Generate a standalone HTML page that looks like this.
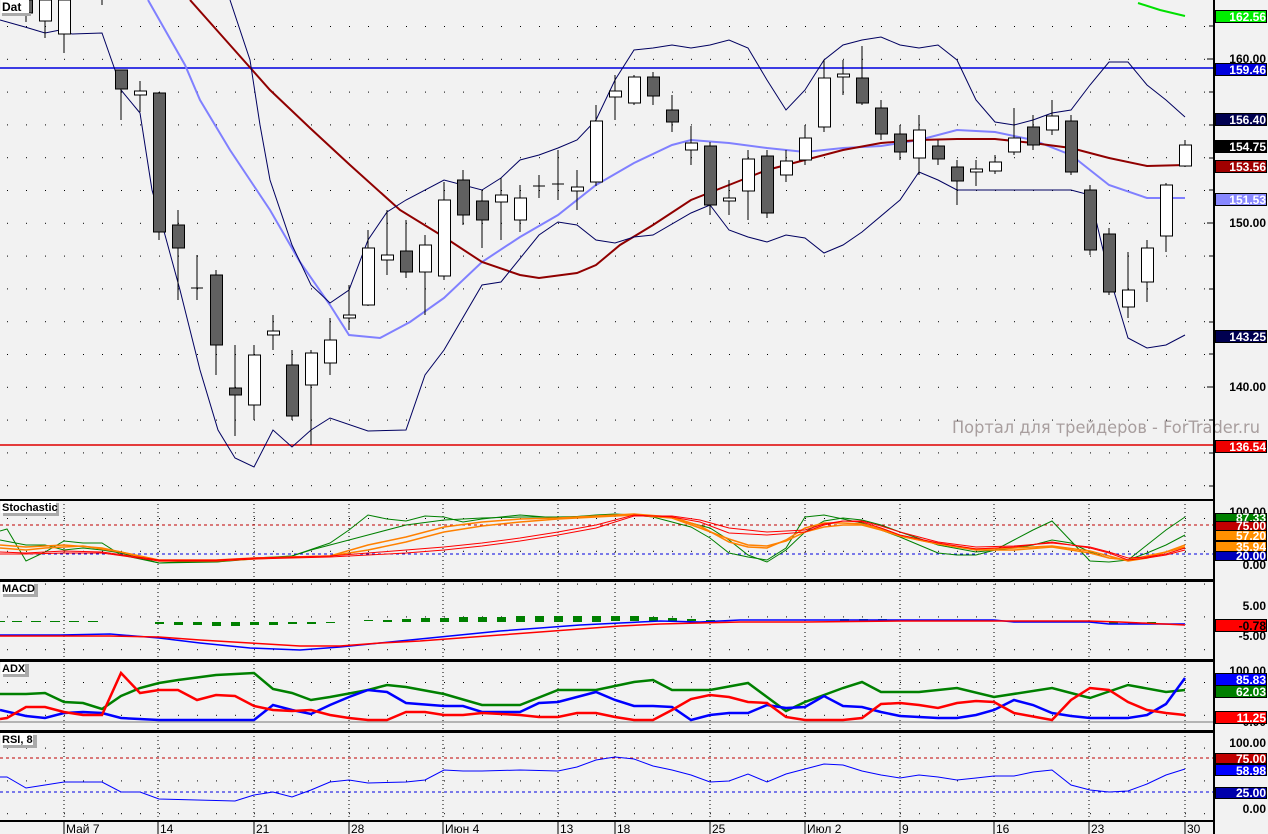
<!DOCTYPE html>
<html><head><meta charset="utf-8"><style>
body{margin:0;background:#f2f2f2;}
svg{display:block;font-family:"Liberation Sans",sans-serif;}
</style></head><body>
<svg width="1268" height="834" viewBox="0 0 1268 834" xmlns="http://www.w3.org/2000/svg">
<defs>
<pattern id="dots" x="7" y="26" width="19" height="32.8" patternUnits="userSpaceOnUse"><rect x="0" y="0" width="1" height="1" fill="#000"/></pattern>
</defs>
<rect width="1268" height="834" fill="#f2f2f2"/>
<rect x="0" y="0" width="1214" height="821" fill="url(#dots)"/>
<g stroke="#000" stroke-width="1" stroke-dasharray="1,3">
<line x1="64" y1="500" x2="64" y2="821"/><line x1="158" y1="500" x2="158" y2="821"/><line x1="254" y1="500" x2="254" y2="821"/><line x1="349" y1="500" x2="349" y2="821"/><line x1="443" y1="500" x2="443" y2="821"/><line x1="558" y1="500" x2="558" y2="821"/><line x1="615" y1="500" x2="615" y2="821"/><line x1="710" y1="500" x2="710" y2="821"/><line x1="805" y1="500" x2="805" y2="821"/><line x1="900" y1="500" x2="900" y2="821"/><line x1="994" y1="500" x2="994" y2="821"/><line x1="1089" y1="500" x2="1089" y2="821"/><line x1="1185" y1="500" x2="1185" y2="821"/>
</g>
<line x1="0" y1="68" x2="1214" y2="68" stroke="#0000e0" stroke-width="1.5"/>
<line x1="0" y1="445" x2="1214" y2="445" stroke="#e00000" stroke-width="1.5"/>
<polyline fill="none" stroke="#00e000" stroke-width="2" points="1138,3 1160,10 1185,16"/>
<polyline fill="none" stroke="#8080ff" stroke-width="2" points="148,0 185,65 200,100 230,150 270,210 300,262 330,305 349,335 380,338 410,322 444,298 482,262 520,237 558,215 596,185 634,163 672,145 691,140 729,143 767,148 805,152 843,148 881,146 919,140 957,130 995,132 1033,140 1071,155 1090,170 1109,185 1147,198 1185,198"/>
<polyline fill="none" stroke="#900000" stroke-width="2" points="190,0 230,45 270,90 310,128 350,165 400,210 444,237 482,262 520,275 539,278 577,273 596,265 620,245 653,225 691,200 729,185 767,170 805,160 843,150 881,143 919,140 957,139 995,139 1033,143 1071,148 1109,158 1147,166 1185,165"/>
<polyline fill="none" stroke="#000060" stroke-width="1" points="230,0 250,60 260,125 270,180 292,245 311,285 330,303 349,290 368,240 387,212 406,200 444,180 482,190 501,178 520,160 539,155 558,148 577,140 596,120 615,80 634,50 653,48 672,45 691,48 710,45 729,40 748,48 767,80 786,110 805,90 824,60 843,45 862,40 881,37 900,45 919,48 938,45 957,60 976,100 995,122 1014,125 1033,120 1052,113 1071,110 1090,85 1109,62 1128,62 1147,85 1166,100 1185,117"/>
<polyline fill="none" stroke="#000060" stroke-width="1" points="0,20 25,27 45,33 60,30 72,34 102,33 115,70 121,90 140,113 152,190 165,235 180,290 200,370 218,430 235,458 254,467 273,430 292,447 311,430 330,418 368,431 406,430 425,375 444,350 482,285 501,282 539,235 558,222 577,225 596,240 615,243 634,237 653,235 691,213 710,205 729,230 748,237 767,242 786,235 805,238 824,253 843,245 862,232 900,200 919,172 938,180 957,190 1071,190 1090,195 1109,275 1128,338 1147,348 1166,345 1185,335"/>
<g stroke="#000" stroke-width="1">
<line x1="26" y1="0" x2="26" y2="22"/><rect x="20.5" y="0" width="12" height="13" fill="#606060"/>
<line x1="45" y1="0" x2="45" y2="38"/><rect x="39.5" y="0" width="12" height="21" fill="#fff"/>
<line x1="64" y1="0" x2="64" y2="53"/><rect x="58.5" y="0" width="12" height="34" fill="#fff"/>
<line x1="102" y1="0" x2="102" y2="5"/>
<line x1="121" y1="70" x2="121" y2="120"/><rect x="115.5" y="70" width="12" height="19" fill="#606060"/>
<line x1="140" y1="81" x2="140" y2="112"/><rect x="134.5" y="91" width="12" height="4" fill="#fff"/>
<line x1="159" y1="92" x2="159" y2="240"/><rect x="153.5" y="93" width="12" height="139" fill="#606060"/>
<line x1="178" y1="210" x2="178" y2="300"/><rect x="172.5" y="225" width="12" height="23" fill="#606060"/>
<line x1="197" y1="255" x2="197" y2="300"/><line x1="191" y1="288" x2="203" y2="288"/>
<line x1="216" y1="270" x2="216" y2="375"/><rect x="210.5" y="275" width="12" height="70" fill="#606060"/>
<line x1="235" y1="345" x2="235" y2="436"/><rect x="229.5" y="388" width="12" height="7" fill="#606060"/>
<line x1="254" y1="345" x2="254" y2="420"/><rect x="248.5" y="355" width="12" height="50" fill="#fff"/>
<line x1="273" y1="315" x2="273" y2="350"/><rect x="267.5" y="331" width="12" height="4" fill="#fff"/>
<line x1="292" y1="350" x2="292" y2="420"/><rect x="286.5" y="365" width="12" height="51" fill="#606060"/>
<line x1="311" y1="350" x2="311" y2="445"/><rect x="305.5" y="353" width="12" height="32" fill="#fff"/>
<line x1="330" y1="318" x2="330" y2="375"/><rect x="324.5" y="340" width="12" height="23" fill="#fff"/>
<line x1="349" y1="285" x2="349" y2="330"/><rect x="343.5" y="315" width="12" height="3" fill="#fff"/>
<line x1="368" y1="230" x2="368" y2="306"/><rect x="362.5" y="248" width="12" height="57" fill="#fff"/>
<line x1="387" y1="210" x2="387" y2="275"/><rect x="381.5" y="255" width="12" height="5" fill="#fff"/>
<line x1="406" y1="220" x2="406" y2="278"/><rect x="400.5" y="251" width="12" height="21" fill="#606060"/>
<line x1="425" y1="235" x2="425" y2="315"/><rect x="419.5" y="245" width="12" height="27" fill="#fff"/>
<line x1="444" y1="182" x2="444" y2="280"/><rect x="438.5" y="200" width="12" height="76" fill="#fff"/>
<line x1="463" y1="170" x2="463" y2="225"/><rect x="457.5" y="180" width="12" height="35" fill="#606060"/>
<line x1="482" y1="190" x2="482" y2="248"/><rect x="476.5" y="201" width="12" height="19" fill="#606060"/>
<line x1="501" y1="178" x2="501" y2="240"/><rect x="495.5" y="195" width="12" height="7" fill="#fff"/>
<line x1="520" y1="185" x2="520" y2="232"/><rect x="514.5" y="198" width="12" height="22" fill="#fff"/>
<line x1="539" y1="175" x2="539" y2="198"/><line x1="533" y1="186" x2="545" y2="186"/>
<line x1="558" y1="150" x2="558" y2="200"/><line x1="552" y1="184" x2="564" y2="184"/>
<line x1="577" y1="170" x2="577" y2="210"/><rect x="571.5" y="187" width="12" height="4" fill="#fff"/>
<line x1="596" y1="105" x2="596" y2="186"/><rect x="590.5" y="121" width="12" height="61" fill="#fff"/>
<line x1="615" y1="75" x2="615" y2="120"/><rect x="609.5" y="91" width="12" height="6" fill="#fff"/>
<line x1="634" y1="75" x2="634" y2="105"/><rect x="628.5" y="77" width="12" height="26" fill="#fff"/>
<line x1="653" y1="72" x2="653" y2="105"/><rect x="647.5" y="77" width="12" height="19" fill="#606060"/>
<line x1="672" y1="95" x2="672" y2="132"/><rect x="666.5" y="110" width="12" height="12" fill="#606060"/>
<line x1="691" y1="126" x2="691" y2="165"/><rect x="685.5" y="143" width="12" height="7" fill="#fff"/>
<line x1="710" y1="142" x2="710" y2="215"/><rect x="704.5" y="146" width="12" height="59" fill="#606060"/>
<line x1="729" y1="180" x2="729" y2="215"/><rect x="723.5" y="198" width="12" height="3" fill="#fff"/>
<line x1="748" y1="150" x2="748" y2="220"/><rect x="742.5" y="159" width="12" height="32" fill="#fff"/>
<line x1="767" y1="150" x2="767" y2="218"/><rect x="761.5" y="156" width="12" height="57" fill="#606060"/>
<line x1="786" y1="150" x2="786" y2="182"/><rect x="780.5" y="161" width="12" height="14" fill="#fff"/>
<line x1="805" y1="125" x2="805" y2="165"/><rect x="799.5" y="138" width="12" height="22" fill="#fff"/>
<line x1="824" y1="60" x2="824" y2="132"/><rect x="818.5" y="78" width="12" height="49" fill="#fff"/>
<line x1="843" y1="60" x2="843" y2="95"/><rect x="837.5" y="74" width="12" height="3" fill="#fff"/>
<line x1="862" y1="46" x2="862" y2="105"/><rect x="856.5" y="78" width="12" height="25" fill="#606060"/>
<line x1="881" y1="100" x2="881" y2="140"/><rect x="875.5" y="108" width="12" height="26" fill="#606060"/>
<line x1="900" y1="125" x2="900" y2="160"/><rect x="894.5" y="134" width="12" height="18" fill="#606060"/>
<line x1="919" y1="115" x2="919" y2="175"/><rect x="913.5" y="130" width="12" height="28" fill="#fff"/>
<line x1="938" y1="140" x2="938" y2="165"/><rect x="932.5" y="146" width="12" height="13" fill="#606060"/>
<line x1="957" y1="160" x2="957" y2="205"/><rect x="951.5" y="167" width="12" height="14" fill="#606060"/>
<line x1="976" y1="160" x2="976" y2="186"/><rect x="970.5" y="169" width="12" height="3" fill="#fff"/>
<line x1="995" y1="155" x2="995" y2="174"/><rect x="989.5" y="162" width="12" height="9" fill="#fff"/>
<line x1="1014" y1="108" x2="1014" y2="155"/><rect x="1008.5" y="138" width="12" height="14" fill="#fff"/>
<line x1="1033" y1="115" x2="1033" y2="150"/><rect x="1027.5" y="127" width="12" height="18" fill="#606060"/>
<line x1="1052" y1="100" x2="1052" y2="135"/><rect x="1046.5" y="116" width="12" height="14" fill="#fff"/>
<line x1="1071" y1="115" x2="1071" y2="175"/><rect x="1065.5" y="121" width="12" height="51" fill="#606060"/>
<line x1="1090" y1="185" x2="1090" y2="255"/><rect x="1084.5" y="190" width="12" height="60" fill="#606060"/>
<line x1="1109" y1="228" x2="1109" y2="295"/><rect x="1103.5" y="234" width="12" height="58" fill="#606060"/>
<line x1="1128" y1="252" x2="1128" y2="318"/><rect x="1122.5" y="290" width="12" height="17" fill="#fff"/>
<line x1="1147" y1="240" x2="1147" y2="302"/><rect x="1141.5" y="248" width="12" height="34" fill="#fff"/>
<line x1="1166" y1="183" x2="1166" y2="252"/><rect x="1160.5" y="185" width="12" height="51" fill="#fff"/>
<line x1="1185" y1="140" x2="1185" y2="167"/><rect x="1179.5" y="145" width="12" height="21" fill="#fff"/>
</g>
<text x="952" y="433" font-size="17" fill="#a89e9e" font-family="DejaVu Sans, sans-serif" textLength="308" lengthAdjust="spacingAndGlyphs">Портал для трейдеров - ForTrader.ru</text>

<line x1="0" y1="525" x2="1214" y2="525" stroke="#c00000" stroke-dasharray="3,3"/>
<line x1="0" y1="554" x2="1214" y2="554" stroke="#0000e0" stroke-dasharray="3,3"/>
<polyline fill="none" stroke="#008000" points="0,531 7,529 26,561 45,552 64,541 83,543 102,543 121,555 159,563 178,562 216,562 254,559 292,556 330,543 349,530 368,515 387,519 406,521 425,516 444,517 463,522 482,519 520,515 558,518 596,515 615,514 634,515 653,517 672,522 691,527 710,538 729,553 748,557 767,560 786,548 805,517 824,515 843,519 862,523 881,530 900,537 919,545 938,553 957,555 976,555 995,550 1014,540 1033,530 1052,521 1071,541 1090,561 1109,562 1128,560 1147,545 1166,530 1185,517"/>
<polyline fill="none" stroke="#008000" points="0,540 26,545 45,545 64,550 83,548 102,550 121,553 159,563 216,562 254,558 292,556 311,550 330,545 368,535 406,525 444,520 482,518 520,517 558,517 596,516 634,515 672,518 710,528 729,540 748,555 767,562 786,550 805,532 824,521 843,518 862,520 881,525 900,532 938,545 976,552 1014,548 1033,545 1052,540 1071,543 1090,552 1109,558 1128,560 1147,553 1166,545 1185,535"/>
<polyline fill="none" stroke="#ff8000" stroke-width="1.5" points="0,548 26,550 45,548 64,547 83,546 102,549 121,552 159,561 216,561 254,559 292,557 330,556 368,545 406,537 444,527 482,522 520,519 558,518 596,516 634,514 672,517 700,526 729,542 748,547 767,548 786,540 805,528 824,523 843,523 862,524 881,529 900,536 938,544 976,550 1014,550 1052,547 1090,553 1109,558 1128,560 1147,556 1166,552 1185,547"/>
<polyline fill="none" stroke="#ff8000" stroke-width="1.5" points="0,545 26,547 64,545 102,548 159,560 216,560 254,558 292,557 330,556 368,550 406,542 444,532 482,526 520,522 558,519 596,517 634,515 672,518 700,528 729,539 748,545 767,546 786,541 805,532 824,527 843,525 862,525 881,530 900,536 938,544 976,549 1014,548 1052,546 1090,551 1109,556 1128,561 1147,558 1166,552 1185,545"/>
<polyline fill="none" stroke="#ff0000" points="0,552 26,553 64,551 102,552 159,560 216,560 254,558 292,557 330,556 368,553 406,550 444,547 482,543 520,538 558,532 596,525 634,515 672,517 700,522 729,533 767,535 805,532 824,525 843,521 862,522 881,528 900,535 938,543 976,549 1014,547 1052,542 1090,548 1109,553 1128,560 1147,558 1166,555 1185,550"/>
<polyline fill="none" stroke="#ff0000" points="0,554 26,554 64,553 102,553 159,561 216,561 254,559 292,558 330,557 368,555 406,553 444,550 482,546 520,541 558,535 596,528 634,516 672,516 700,520 729,528 767,532 805,530 824,524 843,521 862,521 881,526 900,532 938,542 976,547 1014,546 1052,543 1090,547 1109,552 1128,558 1147,557 1166,554 1185,548"/>

<g fill="#008000">
<rect x="0" y="621" width="5" height="1"/><rect x="12" y="621" width="10" height="1"/><rect x="31" y="621" width="10" height="1"/><rect x="50" y="621" width="10" height="1"/><rect x="69" y="621" width="10" height="1"/><rect x="88" y="621" width="10" height="1"/>
<rect x="155" y="622" width="9" height="2"/><rect x="174" y="622" width="9" height="3"/><rect x="193" y="622" width="9" height="3"/><rect x="212" y="622" width="9" height="4"/><rect x="231" y="622" width="9" height="4"/><rect x="250" y="622" width="9" height="3"/><rect x="269" y="622" width="9" height="3"/><rect x="288" y="622" width="9" height="2"/><rect x="307" y="622" width="9" height="2"/><rect x="326" y="622" width="9" height="1"/>
<rect x="364" y="620" width="9" height="1"/><rect x="383" y="620" width="9" height="2"/><rect x="402" y="619" width="9" height="3"/><rect x="421" y="618" width="9" height="4"/><rect x="440" y="618" width="9" height="4"/><rect x="459" y="617" width="9" height="5"/><rect x="478" y="617" width="9" height="5"/><rect x="497" y="617" width="9" height="5"/><rect x="516" y="616" width="9" height="6"/><rect x="535" y="616" width="9" height="6"/><rect x="554" y="616" width="9" height="6"/><rect x="573" y="616" width="9" height="6"/><rect x="592" y="616" width="9" height="6"/><rect x="611" y="616" width="9" height="5"/><rect x="630" y="616" width="9" height="5"/><rect x="649" y="617" width="9" height="4"/><rect x="668" y="618" width="9" height="3"/><rect x="687" y="619" width="9" height="2"/><rect x="706" y="620" width="9" height="1"/>
<rect x="840" y="619" width="9" height="2"/><rect x="859" y="619" width="9" height="2"/><rect x="878" y="619" width="9" height="2"/><rect x="897" y="620" width="9" height="1"/><rect x="916" y="620" width="9" height="1"/>
<rect x="1109" y="622" width="9" height="2"/><rect x="1128" y="622" width="9" height="2"/><rect x="1147" y="622" width="9" height="2"/>
</g>
<polyline fill="none" stroke="#0000ff" stroke-width="1.5" points="0,635 15,635 60,635 110,634 159,638 200,643 250,648 300,650 340,647 380,643 420,639 460,635 500,631 540,628 580,625 620,623 660,621 700,622 740,620 805,620 900,620 994,620 1014,622 1089,622 1109,624 1185,624"/>
<polyline fill="none" stroke="#ff0000" stroke-width="1.5" points="0,636 60,636 110,636 159,637 200,640 250,643 300,646 340,646 380,643 420,641 460,638 500,635 540,632 580,629 620,626 660,624 700,623 740,622 805,622 900,621 1000,621 1089,621 1120,622 1185,625"/>

<line x1="0" y1="722" x2="1214" y2="722" stroke="#777"/>
<polyline fill="none" stroke="#008000" stroke-width="2.5" points="0,694 26,694 45,693 64,702 83,703 102,709 121,696 140,688 159,683 178,680 216,675 254,673 273,689 292,693 311,700 330,697 368,690 387,685 406,687 444,694 482,705 501,705 520,705 558,690 596,690 615,686 634,682 653,680 672,690 710,690 748,683 767,697 786,711 805,702 843,688 862,682 881,692 919,692 957,688 994,697 1052,688 1071,693 1090,698 1128,685 1166,692 1185,690"/>
<polyline fill="none" stroke="#0000ff" stroke-width="2.5" points="0,710 26,716 45,718 64,713 83,712 102,713 121,718 159,720 200,720 254,720 273,705 292,710 311,714 330,705 349,697 368,690 387,692 406,703 444,706 463,706 482,712 520,712 539,703 558,702 596,692 615,700 634,706 653,706 672,707 691,720 710,715 729,713 748,713 767,705 786,708 805,707 824,696 843,706 862,707 881,712 900,716 938,718 957,718 976,715 994,710 1014,700 1033,705 1052,713 1071,716 1090,718 1109,718 1128,718 1147,715 1166,704 1185,678"/>
<polyline fill="none" stroke="#ff0000" stroke-width="2.5" points="0,719 7,718 26,707 45,707 64,712 83,715 102,715 121,673 140,693 159,690 178,690 197,700 216,695 235,696 254,706 273,710 292,711 311,710 330,715 349,718 368,720 387,720 406,712 425,712 444,715 463,715 482,713 520,715 539,717 558,717 577,713 596,713 615,717 634,720 653,720 672,710 691,699 710,695 729,697 748,702 767,703 786,717 805,720 824,720 843,720 862,718 881,704 900,703 919,705 938,708 957,703 976,701 994,702 1014,713 1052,720 1071,700 1090,688 1109,690 1128,702 1147,710 1166,713 1185,715"/>

<line x1="0" y1="758" x2="1214" y2="758" stroke="#c00000" stroke-dasharray="3,3"/>
<line x1="0" y1="792" x2="1214" y2="792" stroke="#0000e0" stroke-dasharray="3,3"/>
<polyline fill="none" stroke="#0000ff" points="0,777 7,777 26,788 45,785 64,782 102,782 121,792 140,792 159,799 197,800 235,801 254,795 273,792 292,797 311,790 330,782 349,780 368,783 406,782 425,780 444,770 463,771 482,771 520,770 558,771 577,767 596,760 615,757 634,759 653,766 672,770 691,775 710,782 729,781 748,774 767,782 786,774 805,769 824,764 843,765 862,771 881,775 900,778 919,775 938,777 957,780 976,778 994,776 1014,776 1033,772 1052,770 1071,785 1090,790 1109,792 1128,791 1147,784 1166,775 1185,769"/>

<g fill="#000">
<rect x="0" y="499" width="1214" height="2"/>
<rect x="0" y="579" width="1214" height="3"/>
<rect x="0" y="659" width="1214" height="3"/>
<rect x="0" y="730" width="1214" height="3"/>
<rect x="0" y="820" width="1214" height="2"/>
<rect x="1213" y="0" width="2" height="834"/>
</g>
<g>
<rect x="2" y="13" width="29" height="3" fill="#aaa"/><rect x="1" y="0" width="28" height="13" fill="#fff"/><text x="2" y="11" font-size="12" font-weight="bold">Dat</text>
<rect x="3" y="503" width="56" height="13" fill="#aaa"/><rect x="1" y="501" width="55" height="12" fill="#fff"/><text x="2" y="511" font-size="11" font-weight="bold">Stochastic</text>
<rect x="3" y="584" width="35" height="13" fill="#aaa"/><rect x="1" y="582" width="33" height="12" fill="#fff"/><text x="2" y="592" font-size="11" font-weight="bold">MACD</text>
<rect x="3" y="664" width="26" height="13" fill="#aaa"/><rect x="1" y="662" width="24" height="12" fill="#fff"/><text x="2" y="672" font-size="11" font-weight="bold">ADX</text>
<rect x="3" y="735" width="34" height="13" fill="#aaa"/><rect x="1" y="733" width="32" height="12" fill="#fff"/><text x="2" y="743" font-size="11" font-weight="bold">RSI, 8</text>
</g>
<g stroke="#000">
<line x1="1207" y1="59" x2="1213" y2="59"/><line x1="1207" y1="223" x2="1213" y2="223"/><line x1="1207" y1="387" x2="1213" y2="387"/>
<line x1="1209" y1="26" x2="1213" y2="26"/><line x1="1209" y1="92" x2="1213" y2="92"/><line x1="1209" y1="125" x2="1213" y2="125"/><line x1="1209" y1="158" x2="1213" y2="158"/><line x1="1209" y1="190" x2="1213" y2="190"/><line x1="1209" y1="256" x2="1213" y2="256"/><line x1="1209" y1="289" x2="1213" y2="289"/><line x1="1209" y1="322" x2="1213" y2="322"/><line x1="1209" y1="354" x2="1213" y2="354"/><line x1="1209" y1="420" x2="1213" y2="420"/><line x1="1209" y1="453" x2="1213" y2="453"/><line x1="1209" y1="486" x2="1213" y2="486"/>
</g>
<g font-size="12" font-weight="bold" text-anchor="end">
<text x="1266" y="63">160.00</text><text x="1266" y="227">150.00</text><text x="1266" y="391">140.00</text>
<text x="1266" y="516">100.00</text><text x="1266" y="569">0.00</text>
<text x="1266" y="610">5.00</text><text x="1266" y="640">-5.00</text>
<text x="1266" y="675">100.00</text><text x="1266" y="726">0.00</text>
<text x="1266" y="747">100.00</text><text x="1266" y="813">0.00</text>
</g>
<g font-size="12" font-weight="bold" text-anchor="end" fill="#fff" stroke-width="1">
<rect x="1215.5" y="10.5" width="51" height="12" fill="#00ee00" stroke="#000"/><text x="1266" y="21">162.56</text>
<rect x="1215.5" y="63.5" width="51" height="12" fill="#0000dd" stroke="#000"/><text x="1266" y="74">159.46</text>
<rect x="1215.5" y="113.5" width="51" height="12" fill="#000050" stroke="#000"/><text x="1266" y="124">156.40</text>
<rect x="1215.5" y="140.5" width="51" height="12" fill="#000" stroke="#000"/><text x="1266" y="151">154.75</text>
<rect x="1215.5" y="160.5" width="51" height="12" fill="#a00000" stroke="#000"/><text x="1266" y="171">153.56</text>
<rect x="1215.5" y="193.5" width="51" height="12" fill="#8888ff" stroke="#000"/><text x="1266" y="204">151.53</text>
<rect x="1215.5" y="330.5" width="51" height="12" fill="#000050" stroke="#000"/><text x="1266" y="341">143.25</text>
<rect x="1215.5" y="440.5" width="51" height="12" fill="#ee0000" stroke="#000"/><text x="1266" y="451">136.54</text>
<rect x="1215.5" y="513.5" width="51" height="9" fill="#008000" stroke="#000"/><text x="1266" y="522">87.33</text>
<rect x="1215.5" y="521.5" width="51" height="9" fill="#c00000" stroke="#000"/><text x="1266" y="530">75.00</text>
<rect x="1215.5" y="530.5" width="51" height="10" fill="#ff9000" stroke="#000"/><text x="1266" y="540">57.20</text>
<rect x="1215.5" y="541.5" width="51" height="10" fill="#ff9000" stroke="#000"/><text x="1266" y="551">35.94</text>
<rect x="1215.5" y="551.5" width="51" height="9" fill="#0000bb" stroke="#000"/><text x="1266" y="560">20.00</text>
<rect x="1215.5" y="619.5" width="51" height="12" fill="#ff0000" stroke="#000"/><text x="1266" y="630" fill="#000">-0.78</text>
<rect x="1215.5" y="673.5" width="51" height="12" fill="#0000ff" stroke="#000"/><text x="1266" y="684">85.83</text>
<rect x="1215.5" y="685.5" width="51" height="12" fill="#008000" stroke="#000"/><text x="1266" y="696">62.03</text>
<rect x="1215.5" y="711.5" width="51" height="12" fill="#ff0000" stroke="#000"/><text x="1266" y="722">11.25</text>
<rect x="1215.5" y="753.5" width="51" height="10" fill="#c00000" stroke="#000"/><text x="1266" y="763">75.00</text>
<rect x="1215.5" y="764.5" width="51" height="11" fill="#0000ff" stroke="#000"/><text x="1266" y="775">58.98</text>
<rect x="1215.5" y="787.5" width="51" height="11" fill="#0000aa" stroke="#000"/><text x="1266" y="797">25.00</text>
</g>
<g font-size="12" fill="#000">
<g stroke="#000"><line x1="64" y1="822" x2="64" y2="834"/><line x1="158" y1="822" x2="158" y2="834"/><line x1="254" y1="822" x2="254" y2="834"/><line x1="349" y1="822" x2="349" y2="834"/><line x1="443" y1="822" x2="443" y2="834"/><line x1="558" y1="822" x2="558" y2="834"/><line x1="615" y1="822" x2="615" y2="834"/><line x1="710" y1="822" x2="710" y2="834"/><line x1="805" y1="822" x2="805" y2="834"/><line x1="900" y1="822" x2="900" y2="834"/><line x1="994" y1="822" x2="994" y2="834"/><line x1="1089" y1="822" x2="1089" y2="834"/><line x1="1185" y1="822" x2="1185" y2="834"/></g>
<text x="66" y="833">Май 7</text><text x="160" y="833">14</text><text x="256" y="833">21</text><text x="351" y="833">28</text><text x="445" y="833">Июн 4</text><text x="560" y="833">13</text><text x="617" y="833">18</text><text x="712" y="833">25</text><text x="807" y="833">Июл 2</text><text x="902" y="833">9</text><text x="996" y="833">16</text><text x="1091" y="833">23</text><text x="1187" y="833">30</text>
</g>
</svg>
</body></html>
